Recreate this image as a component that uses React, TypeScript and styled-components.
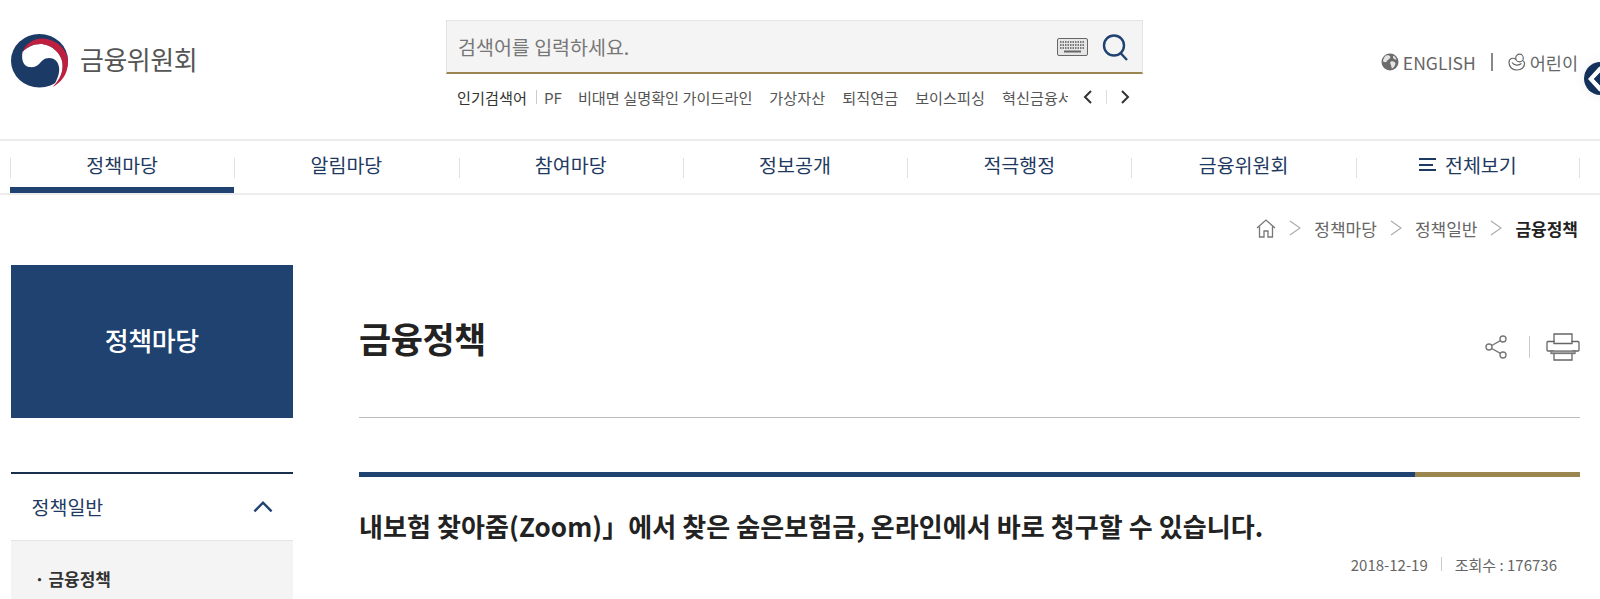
import { createGlobalStyle, styled } from "styled-components";

const NAV_ITEMS = ["정책마당", "알림마당", "참여마당", "정보공개", "적극행정", "금융위원회"];
const KEYWORDS = ["비대면 실명확인 가이드라인", "가상자산", "퇴직연금", "보이스피싱", "혁신금융서비스"];

const GlobalStyle = createGlobalStyle`
    html, body {
        margin: 0;
        padding: 0;
        background: #fff;
        overflow: hidden;
    }
    body {
        font-family: "Noto Sans CJK KR", "Noto Sans", sans-serif;
        color: #222;
    }
    * {
        box-sizing: border-box;
    }
`;

function Emblem() {
    return (
        <svg width="57" height="54" viewBox="0 0 57 54" aria-hidden="true">
            <ellipse cx="28.5" cy="26.8" rx="28.5" ry="26.8" fill="#1c3a66" />
            <path d="M11.5 18C16 13 23 9.5 31 10C41 11 50 19 51.5 29C52.5 38 49 46 41.5 53C46 47 49 39 48 33C47 27 43 24 38 24C33 24 31 27 28 30C25 33 22 33.5 18 33C13 32 10 27 11.5 18Z" fill="#fff" />
            <path d="M11.5 18C15 9 23 4.5 31 4.5C45 5 57 15 57 28C57 40 50 49 41.5 53C49 46 52.5 38 51.5 29C50 19 41 11 31 10C23 9.5 16 13 11.5 18Z" fill="#c0203f" />
        </svg>
    );
}

function Globe() {
    return (
        <svg width="18" height="18" viewBox="0 0 18 18" aria-hidden="true">
            <circle cx="9" cy="9" r="8.5" fill="#6b6b6b" />
            <path d="M5 2.5C7 2 9 2.5 9.5 4C9 6 7 6.5 6 8C5.5 9.5 3.5 9.5 2 8.5C2 6 3.5 3.5 5 2.5ZM10 8.5C12 8 14 9 14.5 10.5C14 13 12.5 15 11 15.5C10 14 10.5 12.5 9.5 11C9 10 9 9 10 8.5ZM12 2.5C14 3.5 15 4.5 15.5 6.5C14 6.5 12.5 6 12 4.5Z" fill="#e4e4e4" />
        </svg>
    );
}

function Kid() {
    return (
        <svg width="18" height="18" viewBox="0 0 18 18" fill="none" stroke="#666" strokeWidth="1.2" aria-hidden="true">
            <circle cx="11.5" cy="5" r="3.8" />
            <path d="M8 6.5C5 4 1 5.5 1 9.5C1 14 4.5 17 9 17C13.5 17 17 14 16.5 10C16.3 9 15.5 8 14.5 7.5" />
            <path d="M4 9.5C6 12.5 10.5 13 13.5 10.5" />
        </svg>
    );
}

function Keyboard() {
    return (
        <svg width="31" height="18" viewBox="0 0 31 18" aria-hidden="true">
            <rect x="0.5" y="0.5" width="30" height="17" rx="1.5" fill="#e6e6e6" stroke="#666" />
            <path d="M3 4H28M3 7H28M3 10H28" stroke="#555" strokeWidth="1.5" strokeDasharray="1.5 1" />
            <path d="M7 13.5H24" stroke="#666" strokeWidth="2" />
        </svg>
    );
}

function SearchIcon() {
    return (
        <svg width="28" height="28" viewBox="0 0 28 28" fill="none" stroke="#1f4270" strokeWidth="2.4" aria-hidden="true">
            <circle cx="13" cy="12.5" r="10" />
            <path d="M19.5 20L26 27" />
        </svg>
    );
}

function Chevron({ dir, size = 14, color = "#333", width = 2 }: { dir: "left" | "right" | "up"; size?: number; color?: string; width?: number }) {
    const d = dir === "left" ? "M10 1L4 7L10 13" : dir === "right" ? "M4 1L10 7L4 13" : "M1 10L7 4L13 10";
    return (
        <svg width={size} height={size} viewBox="0 0 14 14" fill="none" stroke={color} strokeWidth={width} aria-hidden="true">
            <path d={d} />
        </svg>
    );
}

function HomeIcon() {
    return (
        <svg width="20" height="19" viewBox="0 0 20 19" fill="none" stroke="#777" strokeWidth="1.3" aria-hidden="true">
            <path d="M1 9L10 1L19 9M3.5 7.5V18H8V12H12V18H16.5V7.5" />
        </svg>
    );
}

function Crumb() {
    return (
        <svg width="12" height="16" viewBox="0 0 12 16" fill="none" stroke="#aaa" strokeWidth="1.1" aria-hidden="true">
            <path d="M1 1L11 8L1 15" />
        </svg>
    );
}

function ShareIcon() {
    return (
        <svg width="22" height="24" viewBox="0 0 22 24" fill="none" stroke="#777" strokeWidth="1.4" aria-hidden="true">
            <circle cx="18" cy="4" r="3" />
            <circle cx="4" cy="12" r="3" />
            <circle cx="18" cy="20" r="3" />
            <path d="M6.8 10.5L15.4 5.6M6.8 13.5L15.4 18.4" />
        </svg>
    );
}

function PrintIcon() {
    return (
        <svg width="34" height="28" viewBox="0 0 34 28" fill="none" stroke="#666" strokeWidth="1.3" aria-hidden="true">
            <path d="M8 9V1H26V9" />
            <path d="M8 18H2C1 18 1 17.5 1 17V9.5C1 9 1.5 8.5 2 8.5H8V10.5H26V8.5H32C32.5 8.5 33 9 33 9.5V17C33 17.5 33 18 32 18H26" />
            <rect x="5" y="18" width="24" height="2.5" fill="#aaa" stroke="#777" />
            <path d="M8 20.5V27H26V20.5" />
        </svg>
    );
}

export default function App() {
    return (
        <Page>
            <GlobalStyle />
            <Header>
                <Logo>
                    <Emblem />
                    <LogoText>금융위원회</LogoText>
                </Logo>
                <SearchColumn>
                    <SearchBox>
                        <Placeholder>검색어를 입력하세요.</Placeholder>
                        <SearchTools>
                            <Keyboard />
                            <SearchIcon />
                        </SearchTools>
                    </SearchBox>
                    <Popular>
                        <PopularLabel>인기검색어</PopularLabel>
                        <PopularFirst>PF</PopularFirst>
                        <KeywordClip>
                            {KEYWORDS.map((word) => (
                                <Keyword key={word}>{word}</Keyword>
                            ))}
                        </KeywordClip>
                        <PopularArrows>
                            <Chevron dir="left" />
                            <ArrowDivider />
                            <Chevron dir="right" />
                        </PopularArrows>
                    </Popular>
                </SearchColumn>
                <Utility>
                    <UtilityLink>
                        <Globe />
                        ENGLISH
                    </UtilityLink>
                    <UtilityDivider />
                    <UtilityLink>
                        <Kid />
                        어린이
                    </UtilityLink>
                </Utility>
            </Header>
            <NavBar>
                <NavInner>
                    {NAV_ITEMS.map((item, i) => (
                        <NavItem key={item} $active={i === 0}>
                            {item}
                        </NavItem>
                    ))}
                    <NavItem $last>
                        <MenuLines />
                        전체보기
                    </NavItem>
                </NavInner>
            </NavBar>
            <Breadcrumb>
                <HomeIcon />
                <Crumb />
                <CrumbText>정책마당</CrumbText>
                <Crumb />
                <CrumbText>정책일반</CrumbText>
                <Crumb />
                <CrumbText $current>금융정책</CrumbText>
            </Breadcrumb>
            <Body>
                <Sidebar>
                    <SideTitle>정책마당</SideTitle>
                    <SideMenu>
                        <SideHead>
                            정책일반
                            <Chevron dir="up" size={20} color="#1f4270" width={1.7} />
                        </SideHead>
                        <SideSub>· 금융정책</SideSub>
                    </SideMenu>
                </Sidebar>
                <Main>
                    <TitleRow>
                        <Title>금융정책</Title>
                        <TitleTools>
                            <ShareIcon />
                            <ToolDivider />
                            <PrintIcon />
                        </TitleTools>
                    </TitleRow>
                    <DoubleBar />
                    <Headline>내보험 찾아줌(Zoom)」에서 찾은 숨은보험금, 온라인에서 바로 청구할 수 있습니다.</Headline>
                    <Meta>
                        2018-12-19
                        <MetaDivider />
                        조회수 : 176736
                    </Meta>
                </Main>
            </Body>
            <SideToggle>
                <svg width="15" height="26" viewBox="0 0 15 26" fill="none" aria-hidden="true">
                    <path d="M13 2L3 13L13 24" stroke="#fff" strokeWidth="4.5" />
                    <path d="M13 7L7 13L13 19" stroke="#12305a" strokeWidth="1.5" />
                </svg>
            </SideToggle>
        </Page>
    );
}

const Page = styled.div`
    position: relative;
    width: 1600px;
    height: 599px;
    overflow: hidden;
`;

const Header = styled.header`
    display: flex;
    height: 139px;
    padding: 20px 22px 0 11px;
`;

const Logo = styled.div`
    display: flex;
    align-items: flex-start;
    width: 435px;
    padding-top: 14px;
    gap: 12px;
`;

const LogoText = styled.div`
    margin-top: 10px;
    font-size: 26px;
    line-height: 30px;
    letter-spacing: -0.5px;
    color: #555;
`;

const SearchColumn = styled.div`
    width: 697px;
`;

const SearchBox = styled.div`
    display: flex;
    align-items: center;
    justify-content: space-between;
    height: 54px;
    padding: 0 13px 0 11px;
    background: #f4f4f4;
    border: 1px solid #e3e3e3;
    border-bottom: 2px solid #9b8650;
`;

const Placeholder = styled.span`
    font-size: 19.5px;
    color: #777;
`;

const SearchTools = styled.div`
    display: flex;
    align-items: center;
    gap: 13px;
`;

const Popular = styled.div`
    display: flex;
    align-items: center;
    height: 32px;
    margin-top: 7px;
    padding-left: 11px;
    font-size: 15.2px;
    color: #555;
    white-space: nowrap;
`;

const PopularLabel = styled.span`
    color: #333;
`;

const PopularFirst = styled.span`
    margin-left: 9px;
    padding-left: 7px;
    line-height: 14px;
    border-left: 1px solid #ccc;
`;

const KeywordClip = styled.div`
    display: flex;
    width: 490px;
    margin-left: 16px;
    overflow: hidden;
    gap: 17px;
`;

const Keyword = styled.span`
    flex: none;
`;

const PopularArrows = styled.div`
    display: flex;
    align-items: center;
    gap: 11px;
    margin-left: 13px;
`;

const ArrowDivider = styled.span`
    width: 1px;
    height: 14px;
    background: #ddd;
`;

const Utility = styled.div`
    display: flex;
    align-items: flex-start;
    justify-content: flex-end;
    flex: 1;
    padding-top: 32px;
    color: #666;
`;

const UtilityLink = styled.span`
    display: flex;
    align-items: center;
    gap: 4px;
    height: 20px;
    font-size: 17.5px;
`;

const UtilityDivider = styled.span`
    width: 2px;
    height: 18px;
    margin: 1px 15px 0 15px;
    background: #888;
`;

const NavBar = styled.nav`
    height: 56px;
    padding: 0 20px 0 10px;
    border-top: 2px solid #ececec;
    border-bottom: 2px solid #ececec;
`;

const NavInner = styled.div`
    display: grid;
    grid-template-columns: repeat(7, 1fr);
    height: 52px;
`;

const NavItem = styled.div<{ $active?: boolean; $last?: boolean }>`
    position: relative;
    display: flex;
    align-items: center;
    justify-content: center;
    gap: 9px;
    height: 52px;
    padding-top: 1px;
    font-size: 19.5px;
    color: #1f3a62;
    border-bottom: 6px solid ${(p) => (p.$active ? "#1f4270" : "transparent")};

    &::before {
        content: "";
        position: absolute;
        left: 0;
        top: 17px;
        width: 1px;
        height: 20px;
        background: #e0e0e0;
    }

    ${(p) =>
        p.$last &&
        `&::after {
            content: "";
            position: absolute;
            right: 0;
            top: 17px;
            width: 1px;
            height: 20px;
            background: #e0e0e0;
        }`}
`;

const MenuLines = styled.span`
    width: 17px;
    height: 13px;
    border-top: 2px solid #1f3a62;
    border-bottom: 2px solid #1f3a62;
    background: linear-gradient(#1f3a62, #1f3a62) left center / 14px 2px no-repeat;
`;

const Breadcrumb = styled.div`
    display: flex;
    align-items: center;
    justify-content: flex-end;
    gap: 13px;
    height: 28px;
    margin-top: 19px;
    padding-right: 22px;
`;

const CrumbText = styled.span<{ $current?: boolean }>`
    font-size: 17px;
    font-weight: ${(p) => (p.$current ? 700 : 400)};
    color: ${(p) => (p.$current ? "#222" : "#666")};
`;

const Body = styled.div`
    display: flex;
    gap: 66px;
    margin-top: 23px;
    padding: 0 20px 0 10.5px;
`;

const Sidebar = styled.aside`
    flex: none;
    width: 282.5px;
`;

const SideTitle = styled.div`
    display: flex;
    align-items: center;
    justify-content: center;
    height: 153px;
    padding-bottom: 5px;
    font-size: 26px;
    font-weight: 500;
    letter-spacing: -0.4px;
    color: #fff;
    background: #1f4270;
`;

const SideMenu = styled.div`
    margin-top: 54px;
    border-top: 2px solid #1a2f4e;
`;

const SideHead = styled.div`
    display: flex;
    align-items: center;
    justify-content: space-between;
    height: 67px;
    padding: 0 20px 1px 21px;
    font-size: 19.5px;
    color: #1f3a62;
    border-bottom: 1px solid #e4e4e4;
`;

const SideSub = styled.div`
    height: 60px;
    padding: 24px 0 0 24px;
    font-size: 17px;
    line-height: 28px;
    font-weight: 700;
    color: #333;
    background: #f4f4f4;
`;

const Main = styled.main`
    flex: 1;
    min-width: 0;
`;

const TitleRow = styled.div`
    display: flex;
    align-items: flex-start;
    justify-content: space-between;
    height: 153px;
    padding-top: 47px;
    border-bottom: 1px solid #bbb;
`;

const Title = styled.h1`
    margin: 0;
    font-size: 35px;
    line-height: 52px;
    font-weight: 700;
    letter-spacing: -0.5px;
    color: #222;
`;

const TitleTools = styled.div`
    display: flex;
    align-items: center;
    height: 40px;
    padding-top: 30px;
`;

const ToolDivider = styled.span`
    width: 1px;
    height: 22px;
    margin: 0 16px 0 22px;
    background: #ccc;
`;

const DoubleBar = styled.div`
    height: 5px;
    margin-top: 54px;
    background: linear-gradient(to right, #1f4270 1056px, #9b8650 1056px);
`;

const Headline = styled.h2`
    margin: 29px 0 0;
    font-size: 26px;
    line-height: 40px;
    font-weight: 700;
    letter-spacing: 0.08px;
    color: #222;
`;

const Meta = styled.div`
    display: flex;
    align-items: center;
    justify-content: flex-end;
    height: 24px;
    margin-top: 6px;
    padding-right: 23px;
    font-size: 15px;
    color: #666;
`;

const MetaDivider = styled.span`
    width: 1px;
    height: 14px;
    margin: 0 13px;
    background: #ccc;
`;

const SideToggle = styled.div`
    position: absolute;
    top: 62px;
    left: 1584px;
    display: flex;
    align-items: center;
    justify-content: flex-start;
    width: 33px;
    height: 33px;
    padding-left: 4px;
    border-radius: 50%;
    background: #12305a;
    box-shadow: 0 0 12px rgba(0, 0, 0, 0.08);
`;
